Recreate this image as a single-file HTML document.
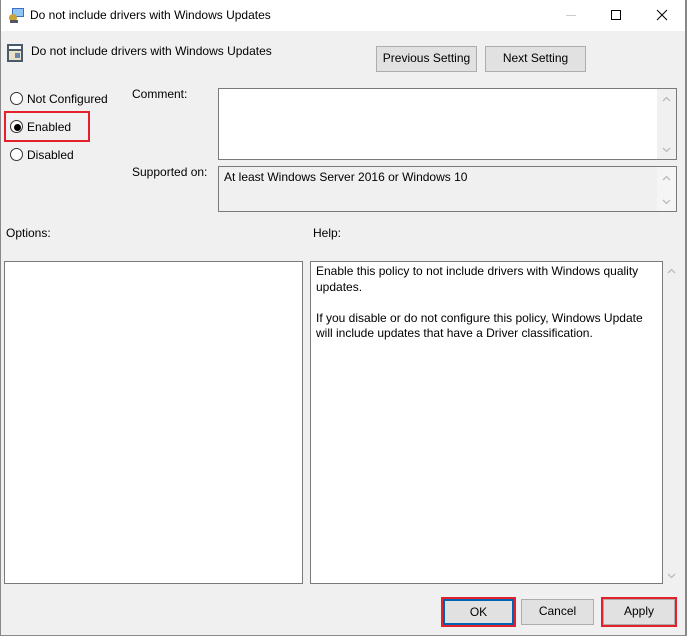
<!DOCTYPE html>
<html><head><style>
*{margin:0;padding:0;box-sizing:border-box}
body{width:687px;height:636px;background:#f0f0f0;font-family:"Liberation Sans",sans-serif;font-size:12px;color:#000;position:relative;overflow:hidden}
.a{position:absolute;white-space:nowrap}
.box{position:absolute;border:1px solid #7a7a7a;background:#fff}
.btn{position:absolute;background:#e1e1e1;border:1px solid #adadad;text-align:center;line-height:23px}
.radio{position:absolute;width:13px;height:13px;border:1px solid #333;border-radius:50%;background:#fff}
.up,.dn{position:absolute;width:9px;height:6px}
</style></head><body>
<div class="a" style="left:0;top:0;width:687px;height:31px;background:#fff"></div>
<div class="a" style="left:0;top:0;width:1px;height:636px;background:#888"></div>
<div class="a" style="right:0;top:0;width:2px;height:636px;background:#888"></div>
<div class="a" style="left:0;bottom:0;width:687px;height:1px;background:#888"></div>
<svg class="a" style="left:8px;top:7px" width="18" height="17"><rect x="4" y="1" width="12" height="9" fill="#3a6fc4"/><rect x="5" y="2" width="10" height="7" fill="#8ec5f2"/><circle cx="5" cy="11" r="4" fill="#c9a23c"/><rect x="2" y="13" width="8" height="3" fill="#556"/></svg>
<div class="a" style="left:30px;top:8px">Do not include drivers with Windows Updates</div>
<div class="a" style="left:566px;top:15px;width:10px;height:1px;background:#ccc"></div>
<div class="a" style="left:611px;top:10px;width:10px;height:10px;border:1px solid #000"></div>
<svg class="a" style="left:656px;top:9px" width="12" height="12"><path d="M1 1L11 11M11 1L1 11" stroke="#000" stroke-width="1"/></svg>

<svg class="a" style="left:7px;top:44px" width="16" height="18"><rect x="0" y="0" width="16" height="18" fill="#4a5a6a"/><rect x="2" y="2" width="12" height="3" fill="#fff"/><rect x="2" y="7" width="12" height="9" fill="#e8e0c8"/><rect x="8" y="9" width="5" height="5" fill="#6688aa"/></svg>
<div class="a" style="left:31px;top:44px">Do not include drivers with Windows Updates</div>
<div class="btn" style="left:376px;top:46px;width:101px;height:26px">Previous Setting</div>
<div class="btn" style="left:485px;top:46px;width:101px;height:26px">Next Setting</div>

<div class="radio" style="left:10px;top:92px"></div>
<div class="a" style="left:27px;top:92px">Not Configured</div>
<div class="radio" style="left:10px;top:120px"></div>
<div class="a" style="left:14px;top:124px;width:7px;height:7px;border-radius:50%;background:#000"></div>
<div class="a" style="left:27px;top:120px">Enabled</div>
<div class="a" style="left:4px;top:111px;width:86px;height:31px;border:2px solid #e3202b"></div>
<div class="radio" style="left:10px;top:148px"></div>
<div class="a" style="left:27px;top:148px">Disabled</div>

<div class="a" style="left:132px;top:87px">Comment:</div>
<div class="box" style="left:218px;top:88px;width:459px;height:72px"></div>
<div class="a" style="left:657px;top:89px;width:19px;height:70px;background:#f0f0f0"></div>
<svg class="up" style="left:662px;top:96px"><path d="M1 5L4.5 1.5L8 5" stroke="#bbb" fill="none" stroke-width="1.3"/></svg>
<svg class="dn" style="left:662px;top:147px"><path d="M1 1L4.5 4.5L8 1" stroke="#bbb" fill="none" stroke-width="1.3"/></svg>
<div class="a" style="left:132px;top:165px">Supported on:</div>
<div class="box" style="left:218px;top:166px;width:459px;height:46px;background:#f0f0f0"></div>
<div class="a" style="left:657px;top:167px;width:19px;height:44px;background:#f5f5f5"></div>
<svg class="up" style="left:662px;top:175px"><path d="M1 5L4.5 1.5L8 5" stroke="#bbb" fill="none" stroke-width="1.3"/></svg>
<svg class="dn" style="left:662px;top:199px"><path d="M1 1L4.5 4.5L8 1" stroke="#bbb" fill="none" stroke-width="1.3"/></svg>
<div class="a" style="left:224px;top:170px">At least Windows Server 2016 or Windows 10</div>

<div class="a" style="left:6px;top:226px">Options:</div>
<div class="a" style="left:313px;top:226px">Help:</div>
<div class="box" style="left:4px;top:261px;width:299px;height:323px"></div>
<div class="box" style="left:310px;top:261px;width:353px;height:323px"></div>
<svg class="up" style="left:667px;top:268px"><path d="M1 5L4.5 1.5L8 5" stroke="#bbb" fill="none" stroke-width="1.3"/></svg>
<svg class="dn" style="left:667px;top:573px"><path d="M1 1L4.5 4.5L8 1" stroke="#bbb" fill="none" stroke-width="1.3"/></svg>
<div class="a" style="left:316px;top:264px;line-height:15.5px;white-space:normal;width:340px">Enable this policy to not include drivers with Windows quality updates.<br><br>If you disable or do not configure this policy, Windows Update will include updates that have a Driver classification.</div>

<div class="btn" style="left:443px;top:599px;width:71px;height:26px;border:2px solid #0063b1">OK</div>
<div class="a" style="left:441px;top:597px;width:75px;height:30px;border:2px solid #e3202b"></div>
<div class="btn" style="left:521px;top:599px;width:73px;height:26px">Cancel</div>
<div class="btn" style="left:603px;top:599px;width:72px;height:26px">Apply</div>
<div class="a" style="left:601px;top:597px;width:76px;height:30px;border:2px solid #e3202b"></div>
</body></html>
